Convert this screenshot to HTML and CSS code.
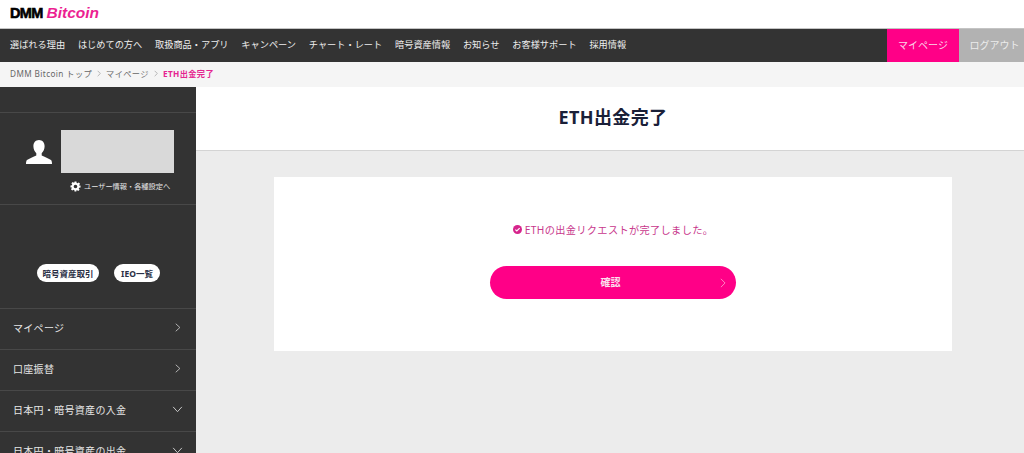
FILE: index.html
```html
<!DOCTYPE html>
<html lang="ja">
<head>
    <meta charset="UTF-8">
    <title>ETH出金完了</title>
    <link rel="stylesheet" href="styles.css">
</head>
<body>
    <header class="logo-bar">
        <a class="logo"><span class="logo-dmm">DMM</span><span class="logo-bitcoin">Bitcoin</span></a>
    </header>
    <nav class="global-nav">
        <ul class="nav-list">
            <li>選ばれる理由</li>
            <li>はじめての方へ</li>
            <li>取扱商品・アプリ</li>
            <li>キャンペーン</li>
            <li>チャート・レート</li>
            <li>暗号資産情報</li>
            <li>お知らせ</li>
            <li>お客様サポート</li>
            <li>採用情報</li>
        </ul>
        <a class="nav-btn nav-mypage">マイページ</a>
        <a class="nav-btn nav-logout">ログアウト</a>
    </nav>
    <div class="breadcrumb">
        <span>DMM Bitcoin トップ</span>
        <svg class="crumb-arrow" viewBox="0 0 6 10"><path d="M1 1l4 4-4 4"/></svg>
        <span>マイページ</span>
        <svg class="crumb-arrow" viewBox="0 0 6 10"><path d="M1 1l4 4-4 4"/></svg>
        <span class="crumb-current">ETH出金完了</span>
    </div>
    <div class="layout">
        <aside class="sidebar">
            <div class="side-top"></div>
            <div class="user-block">
                <div class="user-row">
                    <svg class="user-icon" viewBox="0 0 26 24"><path d="M13 0c3.600 0 5.600 2.800 5.600 6.300 0 2.900-1.200 5.400-2.900 6.900v2.300c2.600 1.300 7.400 3 9.300 4.600 .6 .6 1 1.900 1 3.900H0c0-2 .4-3.300 1-3.900 1.900-1.600 6.700-3.300 9.300-4.600v-2.300c-1.700-1.500-2.900-4-2.900-6.900C7.400 2.800 9.400 0 13 0z"/></svg>
                    <div class="user-name"></div>
                </div>
                <a class="user-settings">
                    <svg class="gear-icon" viewBox="0 0 24 24"><path d="M10 1h4l.6 3.100 1.900.8 2.600-1.800 2.800 2.800-1.800 2.600.8 1.900L23 10v4l-3.100.6-.8 1.900 1.800 2.600-2.800 2.800-2.600-1.800-1.900.8L13.900 23h-4l-.5-3.100-1.900-.8-2.600 1.800-2.800-2.800 1.800-2.600-.8-1.900L1 14v-4l3.100-.5.800-1.900L3.100 5l2.800-2.800 2.600 1.800 1-.8L10 1zm2 7a4 4 0 1 0 0 8 4 4 0 0 0 0-8z" fill-rule="evenodd"/></svg>
                    ユーザー情報・各種設定へ
                </a>
            </div>
            <div class="side-pills">
                <a class="pill pill-trade">暗号資産取引</a>
                <a class="pill pill-ieo">IEO一覧</a>
            </div>
            <ul class="side-menu">
                <li><span class="menu-label">マイページ</span><svg class="chev" viewBox="0 0 8 12"><path d="M1 1l5.500 5L1 11"/></svg></li>
                <li><span class="menu-label">口座振替</span><svg class="chev" viewBox="0 0 8 12"><path d="M1 1l5.500 5L1 11"/></svg></li>
                <li><span class="menu-label">日本円・暗号資産の入金</span><svg class="chev chev-down" viewBox="0 0 12 8"><path d="M1 1l5 5.500L11 1"/></svg></li>
                <li><span class="menu-label">日本円・暗号資産の出金</span><svg class="chev chev-down" viewBox="0 0 12 8"><path d="M1 1l5 5.500L11 1"/></svg></li>
            </ul>
        </aside>
        <main class="main">
            <h1 class="page-title">ETH出金完了</h1>
            <section class="card">
                <p class="done-msg">
                    <svg class="check-icon" viewBox="0 0 16 16"><circle cx="8" cy="8" r="8"/><path d="M4.200 8.200l2.600 2.500 5-5"/></svg>
                    ETHの出金リクエストが完了しました。
                </p>
                <a class="confirm-btn">確認<svg class="btn-arrow" viewBox="0 0 7 12"><path d="M1 1l5 5-5 5"/></svg></a>
            </section>
        </main>
    </div>
</body>
</html>
```

FILE: styles.css
```css
* {
    box-sizing: border-box;
}
html, body {
    height: 453px;
    overflow: hidden;
}
body {
    margin: 0;
    background: #fff;
    color: #333;
    font-family: "Noto Sans", "Noto Sans CJK JP", sans-serif;
}
ul {
    list-style: none;
    margin: 0;
    padding: 0;
}
.logo-bar {
    height: 29px;
    padding: 1px 0 0 10px;
    background: #fff;
    border-bottom: 1px solid #c4c4c4;
}
.logo {
    display: flex;
    align-items: baseline;
    height: 24px;
    line-height: 24px;
}
.logo-dmm {
    font-family: "Liberation Sans", sans-serif;
    font-size: 14.500px;
    font-weight: bold;
    letter-spacing: -0.7px;
    color: #000;
    -webkit-text-stroke: 0.6px #000;
}
.logo-bitcoin {
    margin-left: 4px;
    font-family: "Liberation Sans", sans-serif;
    font-size: 15.500px;
    font-weight: bold;
    font-style: italic;
    color: #ec1f92;
}
.global-nav {
    display: flex;
    height: 33px;
    background: #333;
    color: #eee;
}
.nav-list {
    display: flex;
    flex: 1;
    align-items: center;
    gap: 12.800px;
    padding: 0 0 3px 10px;
    font-size: 9.200px;
    white-space: nowrap;
}
.nav-btn {
    display: flex;
    align-items: center;
    justify-content: center;
    padding-bottom: 3px;
    font-size: 10px;
}
.nav-mypage {
    width: 72px;
    background: #ff0087;
    color: #fbd5e8;
}
.nav-logout {
    width: 65px;
    padding-left: 6px;
    background: #b2b2b2;
    color: #ececec;
}
.breadcrumb {
    display: flex;
    align-items: center;
    gap: 5px;
    height: 25px;
    padding: 0 0 3px 10px;
    background: #f5f5f5;
    color: #666;
    font-size: 8.200px;
    letter-spacing: 0.4px;
}
.crumb-arrow {
    width: 4px;
    height: 7px;
    fill: none;
    stroke: #999;
}
.crumb-current {
    color: #e5248f;
    font-weight: 700;
}
.layout {
    display: flex;
    height: 366px;
}
.sidebar {
    width: 196px;
    flex: none;
    background: #333;
    color: #e6e6e6;
}
.side-top {
    height: 26px;
    border-bottom: 1px solid #484848;
}
.user-block {
    height: 92px;
    padding: 17px 22px 0 26px;
    border-bottom: 1px solid #484848;
}
.user-row {
    display: flex;
    align-items: center;
    gap: 9px;
}
.user-icon {
    width: 26px;
    height: 24px;
    fill: #fff;
}
.user-name {
    flex: 1;
    height: 43px;
    background: #d9d9d9;
}
.user-settings {
    display: flex;
    align-items: center;
    gap: 3px;
    margin: 7px 0 0 44px;
    font-size: 7.200px;
    line-height: 12px;
    white-space: nowrap;
}
.gear-icon {
    width: 11px;
    height: 11px;
    fill: #fff;
}
.side-pills {
    display: flex;
    gap: 15px;
    height: 103px;
    padding: 59px 0 0 37px;
}
.pill {
    display: flex;
    align-items: center;
    justify-content: center;
    height: 18px;
    border-radius: 9px;
    background: #fff;
    color: #2a2f45;
    font-size: 8.500px;
    font-weight: 700;
    white-space: nowrap;
}
.pill-trade {
    width: 62px;
}
.pill-ieo {
    width: 46px;
}
.side-menu {
    border-top: 1px solid #484848;
}
.side-menu li {
    display: flex;
    align-items: center;
    justify-content: space-between;
    height: 41px;
    padding: 0 14px 4px 13px;
    border-bottom: 1px solid #484848;
    font-size: 10px;
    letter-spacing: 0.3px;
}
.chev {
    width: 6px;
    height: 11px;
    margin-right: 1px;
    fill: none;
    stroke: #ccc;
    stroke-width: 1.100;
}
.chev-down {
    width: 11px;
    height: 7px;
    margin-right: -1px;
}
.main {
    flex: 1;
    background: #ececec;
    padding-bottom: 40px;
}
.page-title {
    height: 64px;
    margin: 0;
    padding-left: 6px;
    background: #fff;
    border-bottom: 1px solid #d4d4d4;
    color: #1a2038;
    font-size: 18px;
    font-weight: 700;
    line-height: 60px;
    letter-spacing: 0.4px;
    text-align: center;
}
.card {
    display: flex;
    flex-direction: column;
    align-items: center;
    width: 678px;
    height: 174px;
    margin: 26px 0 0 78px;
    padding-top: 43px;
    background: #fff;
}
.done-msg {
    display: flex;
    align-items: center;
    gap: 3px;
    height: 18px;
    margin: 0;
    color: #c8378c;
    font-size: 10.200px;
    letter-spacing: 0.35px;
}
.check-icon {
    width: 9px;
    height: 9px;
    fill: #d6248c;
    stroke: none;
}
.check-icon path {
    fill: none;
    stroke: #fff;
    stroke-width: 2;
}
.confirm-btn {
    position: relative;
    display: flex;
    align-items: center;
    justify-content: center;
    width: 246px;
    height: 33px;
    margin-top: 28px;
    padding: 0 5px 2px 0;
    border-radius: 17px;
    background: #ff0087;
    color: #fbe0ee;
    font-size: 10px;
    font-weight: 700;
}
.btn-arrow {
    position: absolute;
    right: 10px;
    top: 12px;
    width: 6px;
    height: 10px;
    fill: none;
    stroke: #ff9ccd;
}
```
